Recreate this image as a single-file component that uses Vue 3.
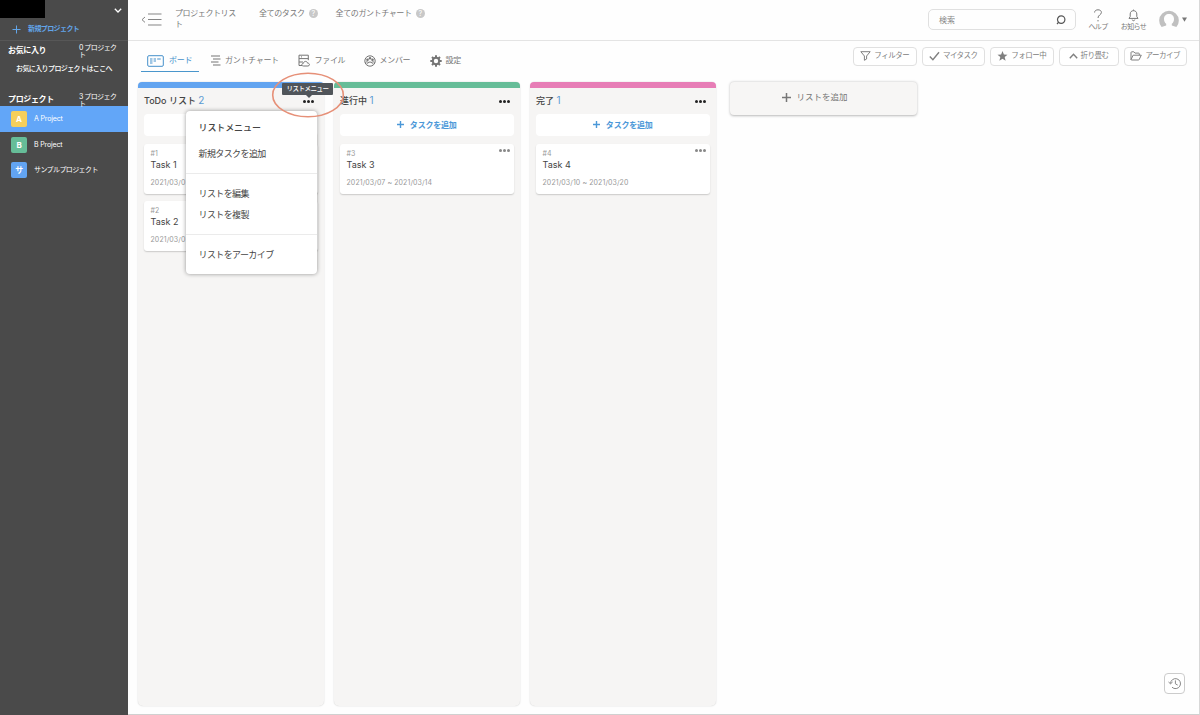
<template>
  <div class="app">
    <aside class="sidebar">
      <div class="workspace">
        <div class="workspace-name"></div>
        <svg class="chevron" width="8" height="5" viewBox="0 0 8 5"><path d="M0.8 0.8 4 4 7.2 0.8" /></svg>
      </div>
      <div class="new-project">
        <svg width="9" height="9" viewBox="0 0 9 9"><path d="M4.5 0.5v8M0.5 4.5h8" /></svg>
        <span>新規プロジェクト</span>
      </div>
      <div class="section favorites">
        <span class="section-title">お気に入り</span>
        <span class="section-count">0 プロジェクト</span>
      </div>
      <p class="favorites-hint">お気に入りプロジェクトはここへ</p>
      <div class="section projects">
        <span class="section-title">プロジェクト</span>
        <span class="section-count">3 プロジェクト</span>
      </div>
      <div
        v-for="project in projects"
        :key="project.name"
        class="project"
        :class="{ active: project.active }"
      >
        <span class="project-icon" :style="{ background: project.color }">{{ project.initial }}</span>
        <span>{{ project.name }}</span>
      </div>
    </aside>

    <main class="main">
      <header class="header">
        <svg class="collapse" width="21" height="13" viewBox="0 0 21 13">
          <path d="M4 4 1 6.7 4 9.4M7 1h13.5M7 6.5h13.5M7 12h13.5" />
        </svg>
        <span class="nav-link nav-projects">プロジェクトリスト</span>
        <span class="nav-link nav-tasks">全てのタスク<i class="hint">?</i></span>
        <span class="nav-link nav-gantt">全てのガントチャート<i class="hint">?</i></span>
        <div class="search">
          <span>検索</span>
          <svg width="10" height="10" viewBox="0 0 10 10"><circle cx="5.2" cy="4.6" r="3.7" /><path d="M2.7 7.1 1 9" /></svg>
        </div>
        <div class="header-button help">
          <svg width="10" height="13" viewBox="0 0 10 13"><path d="M1.6 3.5C1.6 1.8 3 .8 5 .8s3.4 1 3.4 2.7C8.4 5.8 5 5.9 5 9M5 11v1.4" /></svg>
          <span>ヘルプ</span>
        </div>
        <div class="header-button notice">
          <svg width="11" height="13" viewBox="0 0 11 13"><path d="M5.5 .6v1M1 9.4h9L8.8 7.6V5C8.8 2.9 7.4 1.7 5.5 1.7S2.2 2.9 2.2 5v2.6zM4.2 10.6c.2 1.5 2.4 1.5 2.6 0" /></svg>
          <span>お知らせ</span>
        </div>
        <svg class="avatar" width="20" height="20" viewBox="0 0 20 20">
          <path class="avatar-bg" d="M2.6 17A9.8 9.8 0 1 1 17.4 17L12.8 15.4v-1.6c1.4-1 2.2-2.8 2.2-4.8 0-3-2-5-5-5s-5 2-5 5c0 2 .8 3.8 2.2 4.8v1.6z" />
        </svg>
        <svg class="caret" width="5" height="5" viewBox="0 0 5 5"><path d="M0 .5h5L2.5 4.8z" /></svg>
      </header>

      <div class="toolbar">
        <nav class="tabs">
          <div class="tab tab-board">
            <svg width="17" height="12" viewBox="0 0 17 12">
              <rect x=".7" y=".7" width="15.6" height="10.6" rx="1.2" />
              <path d="M3 4h2.5M6.6 4H9M10.2 4h3.5M3 6h2.5M6.6 6H9M3 8h2.5" />
            </svg>
            <span>ボード</span>
          </div>
          <div class="tab tab-gantt">
            <svg width="10" height="11" viewBox="0 0 10 11"><path d="M0 1h9M2 4h7.5M0 7h7.5M2 10h7.5" /></svg>
            <span>ガントチャート</span>
          </div>
          <div class="tab tab-file">
            <svg width="12" height="13" viewBox="0 0 12 13">
              <path d="M4 11.5H1V1.2h9.3v5M1 4.6h9.3M1 8h4M3 2.9h1M5.4 12c-2 0-2-2.7 0-2.7.4-2.5 3.8-2.5 4.1-.2 2.5 0 2.5 2.9.4 2.9z" />
            </svg>
            <span>ファイル</span>
          </div>
          <div class="tab tab-member">
            <svg width="12" height="12" viewBox="0 0 12 12">
              <circle cx="6" cy="6" r="5.2" />
              <circle class="solid" cx="3.5" cy="4.8" r="1.3" />
              <circle class="solid" cx="8.5" cy="4.8" r="1.3" />
              <circle class="solid" cx="6" cy="3.2" r="1.2" />
              <path d="M3 9.3c.2-3 5.8-3 6 0M1.4 7.7c1-1.2 2-1.2 3 0M10.6 7.7c-1-1.2-2-1.2-3 0" />
            </svg>
            <span>メンバー</span>
          </div>
          <div class="tab tab-settings">
            <svg class="gear" width="12" height="12" viewBox="0 0 12 12">
              <circle cx="6" cy="6" r="3.2" />
              <path d="M6 .3v2.2M6 9.5v2.2M.3 6h2.2M9.5 6h2.2M2 2l1.5 1.5M8.5 8.5 10 10M2 10l1.5-1.5M8.5 3.5 10 2" />
            </svg>
            <span>設定</span>
          </div>
        </nav>
        <div class="filters">
          <button class="filter">
            <svg width="11" height="10" viewBox="0 0 11 10"><path d="M.8.7h9.4L6.6 5v3L4.4 9.3V5z" /></svg>
            フィルター
          </button>
          <button class="filter">
            <svg class="check" width="11" height="10" viewBox="0 0 11 10"><path d="M.8 5.5 3.9 8.7 10 1.2" /></svg>
            マイタスク
          </button>
          <button class="filter">
            <svg class="star" width="11" height="10" viewBox="0 0 11 10"><path d="M5.5 0 6.9 3.5l3.6.2-2.8 2.4.9 3.7-3.1-2-3.1 2 .9-3.7L.5 3.7l3.6-.2z" /></svg>
            フォロー中
          </button>
          <button class="filter fold">
            <svg class="check" width="9" height="6" viewBox="0 0 9 6"><path d="M.8 5.2 4.5 1.2 8.2 5.2" /></svg>
            折り畳む
          </button>
          <button class="filter">
            <svg width="12" height="10" viewBox="0 0 12 10"><path d="M1 8.7V1.6Q1 .8 1.8.8h2l1.2 1.3h3.5q.8 0 .8.8v1.3M1 8.7l2.1-4.5h8.2L9.1 8.7Q9 9 8.5 9H1.3z" /></svg>
            アーカイブ
          </button>
        </div>
      </div>

      <div class="board">
        <section v-for="(list, index) in lists" :key="list.title" class="list">
          <div class="list-bar" :style="{ background: list.color }"></div>
          <div class="list-header">
            <span class="list-title">{{ list.title }} <b>{{ list.tasks.length }}</b></span>
            <span class="dots"><i></i><i></i><i></i></span>
          </div>
          <div class="add-task">
            <template v-if="index > 0">
              <svg width="7" height="7" viewBox="0 0 7 7"><path d="M3.5 0v7M0 3.5h7" /></svg>
              タスクを追加
            </template>
          </div>
          <article v-for="task in list.tasks" :key="task.id" class="card">
            <span class="dots card-dots"><i></i><i></i><i></i></span>
            <div class="card-id">#{{ task.id }}</div>
            <div class="card-name">Task {{ task.id }}</div>
            <div class="card-dates">{{ task.dates }}</div>
          </article>
          <template v-if="index === 0">
            <div class="menu">
              <div class="menu-title">リストメニュー</div>
              <div class="menu-item">新規タスクを追加</div>
              <hr />
              <div class="menu-item">リストを編集</div>
              <div class="menu-item">リストを複製</div>
              <hr />
              <div class="menu-item">リストをアーカイブ</div>
            </div>
            <div class="tooltip">リストメニュー</div>
            <svg class="marker" width="74" height="48" viewBox="0 0 74 48"><ellipse cx="37" cy="24" rx="35.3" ry="21.8" /></svg>
          </template>
        </section>
        <button class="add-list">
          <svg width="9" height="9" viewBox="0 0 9 9"><path d="M4.5 0v9M0 4.5h9" /></svg>
          リストを追加
        </button>
      </div>

      <button class="history">
        <svg width="14" height="13" viewBox="0 0 14 13"><path d="M2.5 6.5A5 5 0 1 1 4 10.2M.5 5l2 1.8L4.6 5M7.4 3.4v3.4l2.3 1.3" /></svg>
      </button>
    </main>
  </div>
</template>

<script setup>
const projects = [
  { name: 'A Project', initial: 'A', color: '#f5cf5b', active: true },
  { name: 'B Project', initial: 'B', color: '#66bd98' },
  { name: 'サンプルプロジェクト', initial: 'サ', color: '#62a4f2' }
]

const lists = [
  {
    title: 'ToDo リスト',
    color: '#62a4f0',
    tasks: [
      { id: 1, dates: '2021/03/0' },
      { id: 2, dates: '2021/03/0' }
    ]
  },
  {
    title: '進行中',
    color: '#66bd98',
    tasks: [{ id: 3, dates: '2021/03/07 ~ 2021/03/14' }]
  },
  {
    title: '完了',
    color: '#e77db6',
    tasks: [{ id: 4, dates: '2021/03/10 ~ 2021/03/20' }]
  }
]
</script>

<style>
body {
  overflow: hidden;
}
</style>

<style scoped>
.app {
  display: flex;
  width: 1200px;
  height: 715px;
  background: #fefefe;
  color: #444;
  font-family: Inter, "Noto Sans CJK JP", sans-serif;
  font-size: 8px;
  line-height: 12px;
  white-space: nowrap;
}

.app * {
  box-sizing: border-box;
}

svg {
  flex: none;
  fill: none;
  stroke: currentColor;
}

button {
  font: inherit;
}

/* sidebar */
.sidebar {
  flex: none;
  width: 128px;
  background: #4a4a4a;
  color: #fff;
}

.workspace {
  display: flex;
  justify-content: space-between;
  height: 18px;
}

.workspace-name {
  width: 45px;
  background: #000;
}

.chevron {
  margin: 8px 6px 0 0;
  stroke-width: 1.3;
}

.new-project {
  display: flex;
  align-items: center;
  gap: 7px;
  height: 23px;
  padding-left: 12px;
  border-bottom: 1px solid #575757;
  color: #62a6ea;
  font-size: 7px;
  font-weight: 700;
  letter-spacing: -0.6px;
}

.section {
  display: flex;
  align-items: flex-start;
  height: 19px;
  padding-left: 8px;
}

.section-title {
  width: 71px;
  padding-top: 3px;
  font-size: 8px;
  font-weight: 700;
  letter-spacing: -0.35px;
}

.section-count {
  width: 40px;
  padding-top: 3px;
  font-size: 7px;
  line-height: 7px;
  letter-spacing: -0.55px;
  white-space: normal;
  word-break: break-all;
}

.favorites-hint {
  margin: 3px 0 15px;
  padding-left: 16px;
  font-size: 7px;
  font-weight: 500;
  letter-spacing: -0.6px;
}

.projects {
  height: 16px;
}

.project {
  display: flex;
  align-items: center;
  gap: 7px;
  height: 25.7px;
  padding-left: 11px;
  font-size: 7px;
  letter-spacing: -0.15px;
}

.project:last-child {
  letter-spacing: -0.6px;
}

.project.active {
  background: #62a6f8;
}

.project-icon {
  width: 16px;
  height: 16px;
  border-radius: 2px;
  font-size: 8px;
  font-weight: 700;
  line-height: 16px;
  text-align: center;
}

/* header */
.main {
  flex: 1;
  position: relative;
  border-right: 1px solid #d8d8d8;
  border-bottom: 1px solid #d0d0d0;
}

.header {
  display: flex;
  align-items: flex-start;
  height: 41px;
  border-bottom: 1px solid #e4e4e4;
  color: #777;
}

.collapse {
  margin: 13px 0 0 13px;
  color: #858585;
}

.nav-link {
  padding-top: 8px;
  font-size: 8px;
  line-height: 11px;
}

.nav-projects {
  width: 64px;
  margin-left: 13px;
  letter-spacing: -0.4px;
  white-space: normal;
  word-break: break-all;
}

.nav-tasks {
  margin-left: 20px;
  letter-spacing: -0.4px;
}

.nav-gantt {
  margin-left: 18px;
  letter-spacing: -0.4px;
}

.hint {
  display: inline-block;
  width: 9px;
  height: 9px;
  margin-left: 4px;
  border-radius: 50%;
  background: #c8c8c8;
  color: #fff;
  font-size: 7px;
  font-style: normal;
  line-height: 9px;
  text-align: center;
}

.search {
  display: flex;
  align-items: center;
  justify-content: space-between;
  width: 148px;
  height: 21px;
  margin: 9px 0 0 auto;
  padding: 0 9px 0 10px;
  border: 1px solid #e0e0e0;
  border-radius: 5px;
  color: #888;
}

.search svg {
  color: #555;
  stroke-width: 1.2;
}

.header-button {
  display: flex;
  flex-direction: column;
  align-items: center;
  padding-top: 9px;
  font-size: 7px;
  line-height: 10px;
  letter-spacing: -0.6px;
}

.help {
  width: 20px;
  margin-left: 12px;
}

.notice {
  width: 27px;
  margin-left: 12px;
}

.avatar {
  margin: 10px 0 0 12px;
  stroke: none;
}

.avatar-bg {
  fill: #c0c0c0;
}

.caret {
  margin: 17px 12px 0 3px;
  fill: #777;
  stroke: none;
}

/* tabs and filters */
.toolbar {
  display: flex;
  justify-content: space-between;
  height: 41px;
}

.tabs {
  display: flex;
  padding-left: 13px;
}

.tab {
  display: flex;
  align-items: center;
  height: 31px;
  padding-top: 8px;
  color: #757575;
  letter-spacing: -0.3px;
}

.tab span {
  margin-top: -1px;
}

.tab-board {
  width: 58px;
  padding: 9px 0 0 6px;
  gap: 5px;
  border-bottom: 1px solid #4a96cc;
  color: #4590cb;
}

.tab-gantt {
  width: 98.5px;
  padding-left: 12px;
  gap: 4px;
}

.tab-file {
  width: 66px;
  gap: 5px;
}

.tab-member {
  width: 66px;
  gap: 4px;
}

.tab-settings {
  gap: 4px;
}

.solid {
  fill: currentColor;
  stroke: none;
}

.gear {
  stroke-width: 2;
}

.filters {
  display: flex;
  gap: 5px;
  padding: 6px 12px 0 0;
}

.filter {
  display: flex;
  align-items: center;
  justify-content: center;
  gap: 3px;
  width: 63.5px;
  height: 19px;
  padding: 0 0 1px;
  border: 1px solid #e0e0e0;
  border-radius: 4px;
  background: #fff;
  color: #808080;
  font-size: 7.5px;
  letter-spacing: -0.5px;
}

.filter.fold {
  width: 60px;
}

.check {
  stroke-width: 1.4;
}

.star {
  fill: currentColor;
  stroke: none;
}

/* board */
.board {
  display: flex;
  gap: 9.5px;
  padding-left: 9.5px;
}

.list {
  position: relative;
  width: 186.5px;
  height: 623.5px;
  border-radius: 5px;
  background: #f6f5f4;
  box-shadow: 0 0 1.5px rgba(0, 0, 0, 0.22);
}

.list-bar {
  height: 6px;
  border-radius: 4px 4px 0 0;
}

.list-header {
  display: flex;
  align-items: center;
  justify-content: space-between;
  height: 26px;
  padding: 0 10px 2px 6.5px;
}

.list-title {
  font-size: 9px;
  font-weight: 500;
}

.list-title b {
  color: #5c9bd3;
  font-size: 10px;
  font-weight: 400;
}

.dots {
  display: flex;
  gap: 1px;
  padding-top: 2px;
}

.dots i {
  width: 3px;
  height: 3px;
  border-radius: 50%;
  background: #222;
}

.add-task {
  display: flex;
  align-items: center;
  justify-content: center;
  gap: 6px;
  height: 22px;
  margin: 0 6px 8px;
  padding-bottom: 1px;
  border-radius: 4px;
  background: #fff;
  color: #4b98d8;
  font-size: 8px;
  font-weight: 700;
  letter-spacing: -0.2px;
}

.add-task svg {
  stroke-width: 1.4;
}

.card {
  position: relative;
  height: 50px;
  margin: 0 6px 7px;
  padding: 5px 7px;
  border-radius: 3px;
  background: #fff;
  box-shadow: 0 1px 1.5px rgba(0, 0, 0, 0.18);
}

.card-dots {
  position: absolute;
  top: 3px;
  right: 4px;
}

.card-dots i {
  background: #888;
}

.card-id {
  color: #999;
  font-size: 7px;
  line-height: 10px;
}

.card-name {
  font-size: 9px;
}

.card-dates {
  margin-top: 6px;
  color: #999;
  font-size: 7px;
  letter-spacing: 0.1px;
}

.menu {
  position: absolute;
  top: 29px;
  left: 48.5px;
  width: 131px;
  height: 163px;
  padding-top: 6px;
  border-radius: 4px;
  background: #fff;
  box-shadow: 0 0 4px rgba(0, 0, 0, 0.4);
  font-size: 9px;
}

.menu-title,
.menu-item {
  height: 21px;
  padding-left: 12.5px;
  line-height: 21px;
  letter-spacing: -0.6px;
}

.menu-title {
  margin-bottom: 5px;
  font-weight: 500;
  letter-spacing: -0.1px;
}

.menu hr {
  height: 1px;
  margin: 9px 0;
  border: 0;
  background: #ebebeb;
}

.tooltip {
  position: absolute;
  top: 1px;
  left: 144.5px;
  width: 51px;
  height: 12px;
  border-radius: 1px;
  background: #50555a;
  color: #fff;
  font-size: 6.5px;
  font-weight: 500;
  line-height: 12px;
  letter-spacing: -0.5px;
  text-align: center;
  z-index: 2;
}

.tooltip::after {
  content: '';
  position: absolute;
  top: 12px;
  left: 24px;
  border: 3px solid transparent;
  border-top-color: #50555a;
  border-bottom: 0;
}

.marker {
  position: absolute;
  top: -11px;
  left: 133.5px;
  color: #e69078;
  stroke-width: 1.6;
  z-index: 1;
}

.add-list {
  display: flex;
  align-items: center;
  justify-content: center;
  gap: 5px;
  width: 187px;
  height: 33px;
  margin-left: 4px;
  padding: 0 16px 3px 0;
  border: 0;
  border-radius: 4px;
  background: #f7f6f5;
  box-shadow: 0 0.5px 2.5px rgba(0, 0, 0, 0.28);
  color: #777;
  font-size: 8.5px;
}

.add-list svg {
  stroke-width: 1.5;
}

.history {
  position: absolute;
  right: 14px;
  bottom: 20px;
  display: flex;
  align-items: center;
  justify-content: center;
  width: 21px;
  height: 21px;
  padding: 0;
  border: 1px solid #ccc;
  border-radius: 4px;
  background: #fff;
  color: #888;
}
</style>
